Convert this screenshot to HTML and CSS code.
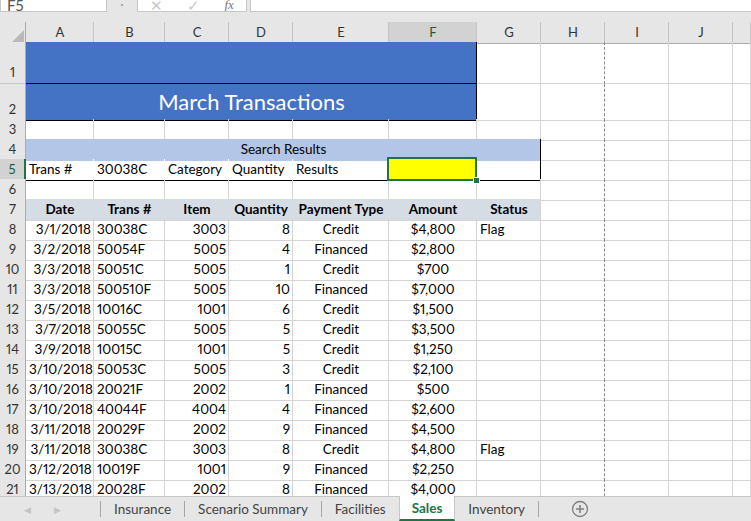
FILE: index.html
```html
<html>
<head>
    <title>Sales</title>
    <link rel="stylesheet" href="styles.css">
</head>
<body>
<div class="app">
    <div class="formulabar">
        <div class="namebox">F5</div>
        <div class="dots">&middot;</div>
        <div class="fxbox"><span>&#x2715;</span><span>&#x2713;</span><span class="fx">fx</span></div>
        <div class="formula"></div>
    </div>

    <div class="sheet">
        <div class="row colheads">
            <div class="corner"><svg width="14" height="14" viewBox="0 0 14 14"><polygon points="13,1 13,13 1,13" fill="#b9b9b9"/></svg></div>
            <div>A</div><div>B</div><div>C</div><div>D</div><div>E</div><div class="cur">F</div><div>G</div><div>H</div><div>I</div><div>J</div><div></div>
        </div>

        <div class="row r1">
            <div class="rh">1</div>
            <div class="title s6"></div>
            <div></div><div class="pb"></div><div></div><div></div><div></div>
        </div>
        <div class="row r2">
            <div class="rh">2</div>
            <div class="title s6">March Transactions</div>
            <div></div><div class="pb"></div><div></div><div></div><div></div>
        </div>
        <div class="row">
            <div class="rh">3</div>
            <div class="bb"></div><div class="bb"></div><div class="bb"></div><div class="bb"></div><div class="bb"></div><div class="bb"></div><div class="bb"></div>
            <div class="pb"></div><div></div><div></div><div></div>
        </div>
        <div class="row">
            <div class="rh">4</div>
            <div class="search s7">Search Results</div>
            <div class="pb"></div><div></div><div></div><div></div>
        </div>
        <div class="row">
            <div class="rh cur">5</div>
            <div class="box">Trans #</div><div class="box">30038C</div><div class="box">Category</div><div class="box">Quantity</div><div class="box">Results</div>
            <div class="box sel"></div><div class="box boxend"></div>
            <div class="pb"></div><div></div><div></div><div></div>
        </div>
        <div class="row">
            <div class="rh">6</div>
            <div></div><div></div><div></div><div></div><div></div><div></div><div></div>
            <div class="pb"></div><div></div><div></div><div></div>
        </div>
        <div class="row">
            <div class="rh">7</div>
            <div class="th">Date</div><div class="th">Trans #</div><div class="th">Item</div><div class="th">Quantity</div><div class="th">Payment Type</div><div class="th">Amount</div><div class="th">Status</div>
            <div class="pb"></div><div></div><div></div><div></div>
        </div>

        <div class="row"><div class="rh">8</div><div class="rt">3/1/2018</div><div>30038C</div><div class="rt">3003</div><div class="rt">8</div><div class="ct">Credit</div><div class="ct">$4,800</div><div>Flag</div><div class="pb"></div><div></div><div></div><div></div></div>
        <div class="row"><div class="rh">9</div><div class="rt">3/2/2018</div><div>50054F</div><div class="rt">5005</div><div class="rt">4</div><div class="ct">Financed</div><div class="ct">$2,800</div><div></div><div class="pb"></div><div></div><div></div><div></div></div>
        <div class="row"><div class="rh">10</div><div class="rt">3/3/2018</div><div>50051C</div><div class="rt">5005</div><div class="rt">1</div><div class="ct">Credit</div><div class="ct">$700</div><div></div><div class="pb"></div><div></div><div></div><div></div></div>
        <div class="row"><div class="rh">11</div><div class="rt">3/3/2018</div><div>500510F</div><div class="rt">5005</div><div class="rt">10</div><div class="ct">Financed</div><div class="ct">$7,000</div><div></div><div class="pb"></div><div></div><div></div><div></div></div>
        <div class="row"><div class="rh">12</div><div class="rt">3/5/2018</div><div>10016C</div><div class="rt">1001</div><div class="rt">6</div><div class="ct">Credit</div><div class="ct">$1,500</div><div></div><div class="pb"></div><div></div><div></div><div></div></div>
        <div class="row"><div class="rh">13</div><div class="rt">3/7/2018</div><div>50055C</div><div class="rt">5005</div><div class="rt">5</div><div class="ct">Credit</div><div class="ct">$3,500</div><div></div><div class="pb"></div><div></div><div></div><div></div></div>
        <div class="row"><div class="rh">14</div><div class="rt">3/9/2018</div><div>10015C</div><div class="rt">1001</div><div class="rt">5</div><div class="ct">Credit</div><div class="ct">$1,250</div><div></div><div class="pb"></div><div></div><div></div><div></div></div>
        <div class="row"><div class="rh">15</div><div class="rt">3/10/2018</div><div>50053C</div><div class="rt">5005</div><div class="rt">3</div><div class="ct">Credit</div><div class="ct">$2,100</div><div></div><div class="pb"></div><div></div><div></div><div></div></div>
        <div class="row"><div class="rh">16</div><div class="rt">3/10/2018</div><div>20021F</div><div class="rt">2002</div><div class="rt">1</div><div class="ct">Financed</div><div class="ct">$500</div><div></div><div class="pb"></div><div></div><div></div><div></div></div>
        <div class="row"><div class="rh">17</div><div class="rt">3/10/2018</div><div>40044F</div><div class="rt">4004</div><div class="rt">4</div><div class="ct">Financed</div><div class="ct">$2,600</div><div></div><div class="pb"></div><div></div><div></div><div></div></div>
        <div class="row"><div class="rh">18</div><div class="rt">3/11/2018</div><div>20029F</div><div class="rt">2002</div><div class="rt">9</div><div class="ct">Financed</div><div class="ct">$4,500</div><div></div><div class="pb"></div><div></div><div></div><div></div></div>
        <div class="row"><div class="rh">19</div><div class="rt">3/11/2018</div><div>30038C</div><div class="rt">3003</div><div class="rt">8</div><div class="ct">Credit</div><div class="ct">$4,800</div><div>Flag</div><div class="pb"></div><div></div><div></div><div></div></div>
        <div class="row"><div class="rh">20</div><div class="rt">3/12/2018</div><div>10019F</div><div class="rt">1001</div><div class="rt">9</div><div class="ct">Financed</div><div class="ct">$2,250</div><div></div><div class="pb"></div><div></div><div></div><div></div></div>
        <div class="row"><div class="rh">21</div><div class="rt">3/13/2018</div><div>20028F</div><div class="rt">2002</div><div class="rt">8</div><div class="ct">Financed</div><div class="ct">$4,000</div><div></div><div class="pb"></div><div></div><div></div><div></div></div>
        <div class="row"><div class="rh">22</div><div></div><div></div><div></div><div></div><div></div><div></div><div></div><div class="pb"></div><div></div><div></div><div></div></div>
    </div>

    <div class="tabbar">
        <div class="nav"><span>&#x25C0;</span><span>&#x25B6;</span></div>
        <div class="tab">Insurance</div>
        <div class="tab">Scenario Summary</div>
        <div class="tab">Facilities</div>
        <div class="tab active">Sales</div>
        <div class="tab">Inventory</div>
        <div class="addsheet"><svg width="18" height="18" viewBox="0 0 18 18"><circle cx="9" cy="9" r="7.5" fill="none" stroke="#808080" stroke-width="1.3"/><path d="M9 5v8M5 9h8" stroke="#808080" stroke-width="1.6"/></svg></div>
    </div>
</div>
</body>
</html>
```

FILE: styles.css
```css
* {
    box-sizing: border-box;
}
body {
    margin: 0;
    font-family: "Lato", "Liberation Sans", sans-serif;
    font-size: 13.5px;
    font-variant-numeric: proportional-nums;
    color: #000;
    background: #fff;
}
.app {
    display: flex;
    flex-direction: column;
    height: 521px;
    overflow: hidden;
}

/* formula bar, top half cut off */
.formulabar {
    height: 22px;
    flex: none;
    display: flex;
    align-items: flex-start;
    background: #e6e6e6;
    overflow: hidden;
}
.namebox {
    width: 107px;
    height: 12px;
    background: #fff;
    border: 1px solid #c6c6c6;
    border-top: none;
    padding-left: 6px;
    line-height: 12px;
    font-size: 15px;
    color: #555;
    display: flex;
    align-items: flex-end;
    overflow: hidden;
}
.dots {
    width: 30px;
    text-align: center;
    color: #999;
    line-height: 8px;
}
.fxbox {
    width: 110px;
    height: 12px;
    background: #fff;
    border: 1px solid #c6c6c6;
    border-top: none;
    display: flex;
    justify-content: space-around;
    align-items: flex-end;
    color: #c8c8c8;
    font-size: 15px;
    line-height: 12px;
    overflow: hidden;
}
.fxbox .fx {
    font-style: italic;
    font-family: "Liberation Serif", serif;
    color: #777;
    font-size: 13px;
}
.formula {
    flex: 1;
    margin-left: 3px;
    height: 12px;
    background: #fff;
    border: 1px solid #c6c6c6;
    border-top: none;
    border-right: none;
}

/* grid */
.sheet {
    flex: 1;
    overflow: hidden;
}
.row {
    display: grid;
    grid-template-columns: 26px 68px 71px 64px 64px 96px 88px 64px 64px 64px 64px 1fr;
    height: 20px;
}
.row > div {
    border-right: 1px solid #d4d4d4;
    border-bottom: 1px solid #d4d4d4;
    line-height: 21px;
    padding: 0 2px 0 3px;
    white-space: nowrap;
}
.row .rt { text-align: right; }
.row .ct { text-align: center; }
.row > .pb {
    border-right: 1px dashed #8c8c8c;
}

.colheads > div {
    background: #e6e6e6;
    text-align: center;
    color: #333;
    border-right-color: #c4c4c4;
    border-bottom-color: #ababab;
    font-size: 13px;
    line-height: 20px;
}
.colheads > .corner {
    padding: 0;
    display: flex;
    justify-content: flex-end;
    align-items: flex-end;
    border-right-color: #ababab;
}
.colheads > .cur {
    background: #d2d2d2;
    color: #1e5e3a;
    border-bottom: 2px solid #217346;
}
.row > .rh {
    background: #e6e6e6;
    color: #333;
    text-align: center;
    font-size: 13px;
    padding: 0;
    border-right-color: #ababab;
    border-bottom-color: #c8c8c8;
}
.row > .rh.cur {
    background: #d2d2d2;
    color: #1e5e3a;
    border-right: 2px solid #217346;
}

.row.r1 { height: 42px; }
.row.r2 { height: 35px; }
.r1 > .rh, .r2 > .rh {
    display: flex;
    align-items: flex-end;
    justify-content: center;
}
.row > .title {
    grid-column: span 6;
    background: #4472c4;
    border-right: 1px solid #000;
    border-bottom: 1px solid #000;
    color: #fff;
    font-size: 22px;
    line-height: 36px;
    text-align: center;
}
.row > .bb { border-bottom-color: #000; }
.row > .search {
    grid-column: span 7;
    background: #b4c6e7;
    border-right: 1px solid #000;
    border-bottom-color: #b4c6e7;
    text-align: center;
}
.row > .box {
    border-right-color: #fff;
    border-bottom-color: #000;
}
.row > .boxend { border-right-color: #000; }
.row > .sel {
    position: relative;
    background: #ffff00;
}
.row > .sel::after {
    content: "";
    position: absolute;
    left: -2px;
    top: -2px;
    right: -1px;
    bottom: -1px;
    border: 2px solid #217346;
}
.row > .sel::before {
    content: "";
    position: absolute;
    right: -4px;
    bottom: -4px;
    width: 5px;
    height: 5px;
    background: #217346;
    border: 1px solid #fff;
    z-index: 1;
}
.row > .th {
    background: #d6dce4;
    border-right-color: #d6dce4;
    font-weight: bold;
    text-align: center;
}
.row > .th:nth-child(8) { border-right-color: #d4d4d4; }

/* sheet tabs */
.tabbar {
    height: 25px;
    flex: none;
    display: flex;
    align-items: stretch;
    background: #e6e6e6;
    border-top: 1px solid #c6c6c6;
    font-size: 13.5px;
    color: #444;
}
.nav {
    width: 100px;
    display: flex;
    padding-left: 24px;
    align-items: center;
    color: #c4c4c4;
    font-size: 9px;
}
.nav span {
    width: 30px;
}
.tab {
    display: flex;
    align-items: center;
    padding: 0 13px;
    border-left: 1px solid #a6a6a6;
    margin: 4px 0;
}
.tab.active {
    margin: -1px 0 0 0;
    padding: 0 12px;
    background: #fff;
    border-left: 1px solid #c6c6c6;
    border-right: 1px solid #c6c6c6;
    border-bottom: 2px solid #217346;
    color: #217346;
    font-weight: bold;
}
.tab.active + .tab { border-left: none; }
.tab:nth-child(6) { border-right: 1px solid #a6a6a6; }
.addsheet {
    display: flex;
    align-items: center;
    padding-left: 32px;
}
```
